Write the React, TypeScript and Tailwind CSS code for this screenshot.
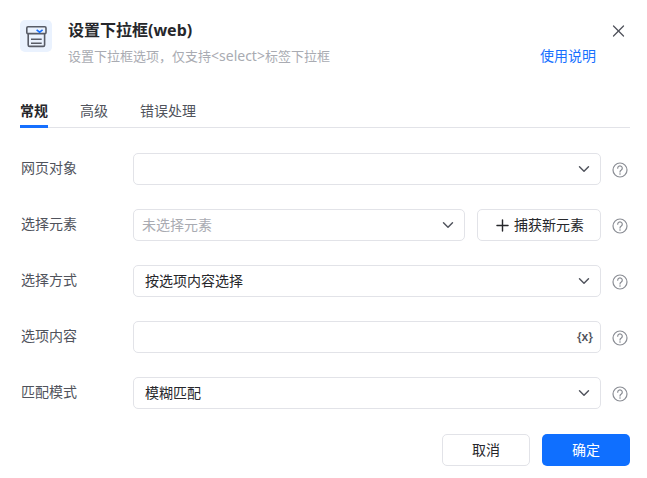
import { ChevronDown, Plus, X } from 'lucide-react';
import type { ReactNode } from 'react';

const font = { fontFamily: '"Noto Sans", "Noto Sans CJK SC", sans-serif' };

function HelpIcon() {
  return (
    <svg width="16" height="16" viewBox="0 0 16 16" fill="none" className="shrink-0 mt-[2px]">
      <circle cx="8" cy="8" r="7" stroke="#8a8d94" strokeWidth="1.2" />
      <path
        d="M5.7 6.2a2.3 2.3 0 1 1 3.6 1.9c-.8.5-1.3 1-1.3 2"
        stroke="#8a8d94"
        strokeWidth="1.2"
        strokeLinecap="round"
      />
      <circle cx="8" cy="12" r="0.8" fill="#8a8d94" />
    </svg>
  );
}

function Field({ children, className = '' }: { children?: ReactNode; className?: string }) {
  return (
    <div
      className={`h-8 flex items-center justify-between rounded-[5px] border border-[#e2e3e8] bg-white text-sm ${className}`}
    >
      {children}
    </div>
  );
}

function Select({ text, placeholder }: { text?: string; placeholder?: boolean }) {
  return (
    <>
      <span className={placeholder ? 'pl-2 text-[#a9abb2]' : 'pl-[11px] text-[#26272b]'}>{text}</span>
      <ChevronDown size={18} strokeWidth={1.9} className="mr-[7px] text-[#50535c]" />
    </>
  );
}

function Row({ label, children }: { label: string; children: ReactNode }) {
  return (
    <div className="flex items-center h-8">
      <div className="w-[113px] pl-px pb-[2px] text-sm text-[#50535c]">{label}</div>
      <div className="flex flex-1 gap-3 items-center">{children}</div>
      <div className="w-[29px] flex justify-end pr-[2px]">
        <HelpIcon />
      </div>
    </div>
  );
}

export default function App() {
  return (
    <div className="w-[647px] h-[478px] bg-white overflow-hidden pt-5 pl-5 pr-[17px]" style={font}>
      {/* Header */}
      <div className="flex h-[45px]">
        <div className="w-8 h-8 rounded-[5px] bg-[#eaf2fe] flex items-center justify-center shrink-0">
          <svg width="24" height="24" viewBox="0 0 24 24" fill="none">
            <rect x="2.8" y="2.8" width="19.2" height="6.8" rx="1.2" stroke="#585c67" strokeWidth="1.6" />
            <path d="M4.2 9.6V21a1.4 1.4 0 0 0 1.4 1.4h13.6a1.4 1.4 0 0 0 1.4-1.4V9.6" stroke="#585c67" strokeWidth="1.6" />
            <path d="M7 15.3h10.7M7 19.3h10.7" stroke="#585c67" strokeWidth="1.5" />
            <path d="M12.6 5.8l3 2.4 3-2.4" stroke="#1670ff" strokeWidth="1.6" />
          </svg>
        </div>
        <div className="ml-4 flex-1">
          <div className="text-base leading-5 font-bold text-[#26272b]">设置下拉框(web)</div>
          <div className="mt-[6px] text-[13px] leading-[18px] text-[#a9abb2]">
            设置下拉框选项，仅支持<span className="text-sm">&lt;select&gt;</span>标签下拉框
          </div>
        </div>
        <div className="flex flex-col items-end">
          <X size={21} strokeWidth={1.5} className="text-[#50535c] mt-px mr-px" />
          <div className="mt-[6px] mr-[34px] text-sm leading-[18px] text-[#1670ff]">使用说明</div>
        </div>
      </div>

      {/* Tabs */}
      <div className="mt-[35px] flex gap-8 border-b border-[#e2e3e8] h-[28px] text-sm leading-5 text-[#50535c]">
        <div className="h-[28px] pt-px border-b-[3px] border-[#1670ff] font-bold text-[#26272b]">常规</div>
        <div className="pt-px">高级</div>
        <div className="pt-px">错误处理</div>
      </div>

      {/* Form */}
      <div className="mt-[25px] flex flex-col gap-6">
        <Row label="网页对象">
          <Field className="flex-1">
            <Select />
          </Field>
        </Row>
        <Row label="选择元素">
          <Field className="flex-1">
            <Select text="未选择元素" placeholder />
          </Field>
          <Field className="w-[124px] justify-center gap-[2px] pr-px text-[#26272b]">
            <Plus size={19} strokeWidth={1.8} />
            <span>捕获新元素</span>
          </Field>
        </Row>
        <Row label="选择方式">
          <Field className="flex-1">
            <Select text="按选项内容选择" />
          </Field>
        </Row>
        <Row label="选项内容">
          <Field className="flex-1">
            <span />
            <span className="mr-[7px] text-xs font-semibold text-[#50535c]">{'{x}'}</span>
          </Field>
        </Row>
        <Row label="匹配模式">
          <Field className="flex-1">
            <Select text="模糊匹配" />
          </Field>
        </Row>
      </div>

      {/* Footer */}
      <div className="mt-[25px] flex justify-end gap-3 text-sm">
        <button className="w-[88px] h-8 rounded-[5px] border border-[#e2e3e8] bg-white text-[#26272b]">取消</button>
        <button className="w-[88px] h-8 rounded-[5px] bg-[#0f6fff] text-white">确定</button>
      </div>
    </div>
  );
}
